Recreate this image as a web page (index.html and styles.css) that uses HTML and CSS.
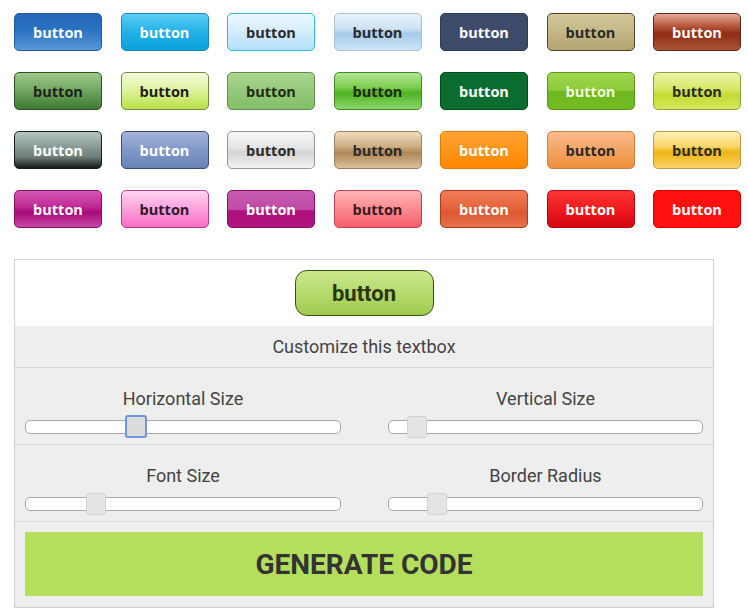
FILE: index.html
```html
<!DOCTYPE html>
<html>
<head>
<meta charset="utf-8">
<link rel="stylesheet" href="styles.css">
</head>
<body>
<div class="grid">
  <div class="btn c-blue">button</div>
  <div class="btn c-sky">button</div>
  <div class="btn c-ice">button</div>
  <div class="btn c-frost">button</div>
  <div class="btn c-navy">button</div>
  <div class="btn c-khaki">button</div>
  <div class="btn c-rust">button</div>

  <div class="btn c-forest">button</div>
  <div class="btn c-limelight">button</div>
  <div class="btn c-sage">button</div>
  <div class="btn c-grass">button</div>
  <div class="btn c-pine">button</div>
  <div class="btn c-lime">button</div>
  <div class="btn c-chartreuse">button</div>

  <div class="btn c-slate">button</div>
  <div class="btn c-steel">button</div>
  <div class="btn c-silver">button</div>
  <div class="btn c-tan">button</div>
  <div class="btn c-orange">button</div>
  <div class="btn c-peach">button</div>
  <div class="btn c-gold">button</div>

  <div class="btn c-magenta">button</div>
  <div class="btn c-pink">button</div>
  <div class="btn c-berry">button</div>
  <div class="btn c-salmon">button</div>
  <div class="btn c-coral">button</div>
  <div class="btn c-red">button</div>
  <div class="btn c-scarlet">button</div>
</div>

<div class="panel">
  <div class="preview">
    <div class="preview-btn">button</div>
  </div>
  <div class="customize">Customize this textbox</div>
  <div class="slider-row">
    <div class="slider">
      <div class="slider-label">Horizontal Size</div>
      <div class="track"><div class="thumb focused" style="left:99px"></div></div>
    </div>
    <div class="slider">
      <div class="slider-label">Vertical Size</div>
      <div class="track"><div class="thumb" style="left:18px"></div></div>
    </div>
  </div>
  <div class="slider-row">
    <div class="slider">
      <div class="slider-label">Font Size</div>
      <div class="track"><div class="thumb" style="left:60px"></div></div>
    </div>
    <div class="slider">
      <div class="slider-label">Border Radius</div>
      <div class="track"><div class="thumb" style="left:38px"></div></div>
    </div>
  </div>
  <div class="generate-wrap">
    <div class="generate">GENERATE CODE</div>
  </div>
</div>
</body>
</html>
```

FILE: styles.css
```css
html, body {
  margin: 0;
  padding: 0;
  background: #ffffff;
}
body {
  padding: 13px 14px 0 14px;
  font-family: Roboto, "Liberation Sans", sans-serif;
}

.grid {
  display: grid;
  grid-template-columns: repeat(7, 88px);
  grid-auto-rows: 38px;
  column-gap: 18.5px;
  row-gap: 21px;
}

.btn {
  box-sizing: border-box;
  border: 1px solid #333;
  border-radius: 5px;
  display: flex;
  align-items: center;
  justify-content: center;
  font-family: "Open Sans", "DejaVu Sans", sans-serif;
  font-weight: 700;
  font-size: 14.5px;
  color: #2b2b2b;
}

/* row 1 */
.c-blue { background: linear-gradient(#2467b6 0%, #2a72c2 45%, #5a97d8 100%); border-color: #1e5a9c; color: #fff; }
.c-sky { background: linear-gradient(#5ecdf5 0%, #22b2e6 50%, #0aa2dc 100%); border-color: #1b85b6; color: #fff; }
.c-ice { background: linear-gradient(#eef8ff 0%, #d3ecfc 50%, #b2dffa 100%); border-color: #3cb6d8; color: #2a2a2a; }
.c-frost { background: linear-gradient(#eaf3fb 0%, #cde2f3 40%, #a4cbea 55%, #cfe4f5 100%); border-color: #a5bfd5; color: #2a2a2a; }
.c-navy { background: #3d4a6a; border-color: #2f3954; color: #fff; }
.c-khaki { background: linear-gradient(#d3c89b 0%, #c2b585 55%, #b4a570 100%); border-color: #4e4428; color: #2a2a2a; }
.c-rust { background: linear-gradient(#e6ab96 0%, #b2543a 35%, #8e2c14 55%, #ad5434 100%); border-color: #5a2818; color: #fff; }

/* row 2 */
.c-forest { background: linear-gradient(#9fc98b 0%, #6fa55e 50%, #3e7a32 100%); border-color: #2c5224; color: #1e1e1e; }
.c-limelight { background: linear-gradient(#f4fcdd 0%, #dcf29a 50%, #b8e047 100%); border-color: #6f8a42; color: #1e1e1e; }
.c-sage { background: linear-gradient(#a9d68e 0%, #92c877 55%, #84bf69 100%); border-color: #5f8f4a; color: #1e2a14; }
.c-grass { background: linear-gradient(#b3e595 0%, #7cce4e 40%, #4fb322 55%, #8ad86b 100%); border-color: #3f8b27; color: #1e2a14; }
.c-pine { background: #0b6c2f; border-color: #074d20; color: #fff; }
.c-lime { background: linear-gradient(#a0d650 0%, #8ccb3a 48%, #6cb71e 52%, #74bc24 100%); border-color: #5a9620; color: #f4ffdc; }
.c-chartreuse { background: linear-gradient(#eaf2a8 0%, #d8e866 45%, #c5da34 60%, #d6e65a 100%); border-color: #8ea238; color: #2a2a2a; }

/* row 3 */
.c-slate { background: linear-gradient(#b5c5bd 0%, #8a9c96 40%, #6c7c76 70%, #141818 100%); border-color: #1c1c1c; color: #fff; }
.c-steel { background: linear-gradient(#a3b5dc 0%, #8298c8 50%, #6882b6 100%); border-color: #3b4b74; color: #fff; }
.c-silver { background: linear-gradient(#f6f6f6 0%, #e4e4e4 45%, #d4d4d4 55%, #f2f2f2 100%); border-color: #979797; color: #2a2a2a; }
.c-tan { background: linear-gradient(#efdcbd 0%, #ceaf84 40%, #ad8656 58%, #dcc29c 100%); border-color: #9c8264; color: #2a2a2a; }
.c-orange { background: linear-gradient(#ffa334 0%, #ff9419 50%, #ff8700 100%); border-color: #e07a00; color: #fff; }
.c-peach { background: linear-gradient(#f8bb8e 0%, #f4a462 50%, #ef903c 100%); border-color: #cf8142; color: #2a2a2a; }
.c-gold { background: linear-gradient(#fff1b4 0%, #fad66a 40%, #efb515 55%, #f8d264 100%); border-color: #c09a44; color: #2a2a2a; }

/* row 4 */
.c-magenta { background: linear-gradient(#d457b4 0%, #c12e99 40%, #a90a79 60%, #c64aa5 100%); border-color: #881060; color: #fff; }
.c-pink { background: linear-gradient(#ffd6f2 0%, #fca0dc 50%, #f66ec6 100%); border-color: #bf3a8e; color: #2e1a2e; }
.c-berry { background: linear-gradient(#c85cb1 0%, #bf4aa6 52%, #ad0f7c 55%, #b01480 100%); border-color: #88105e; color: #fff; }
.c-salmon { background: linear-gradient(#ffb6b6 0%, #fb8a90 50%, #f65e6e 100%); border-color: #c43e58; color: #3a1a1a; }
.c-coral { background: linear-gradient(#f27c56 0%, #e6653e 45%, #dd5730 60%, #e8734c 100%); border-color: #ad3a22; color: #fff; }
.c-red { background: linear-gradient(#ff3434 0%, #ee1b1f 50%, #d60412 100%); border-color: #af0a14; color: #fff; }
.c-scarlet { background: #ff1010; border-color: #d40000; color: #fff; }

/* panel */
.panel {
  margin-top: 31px;
  width: 700px;
  box-sizing: border-box;
  border: 1px solid #cfcfcf;
  background: #eeeeee;
}
.preview {
  background: #ffffff;
  padding: 10px 0;
  display: flex;
  justify-content: center;
}
.preview-btn {
  box-sizing: border-box;
  width: 139px;
  height: 46px;
  border: 1px solid #3c5214;
  border-radius: 12px;
  background: linear-gradient(#cde88f 0%, #b4da6c 50%, #9dcb4e 100%);
  display: flex;
  align-items: center;
  justify-content: center;
  font-weight: 700;
  font-size: 22px;
  color: #2a3612;
}
.customize {
  height: 41px;
  display: flex;
  align-items: center;
  justify-content: center;
  font-size: 18px;
  color: #444;
  border-bottom: 1px solid #d9d9d9;
}
.slider-row {
  height: 76px;
  border-bottom: 1px solid #d9d9d9;
  padding: 0 10px 0 10px;
  display: grid;
  grid-template-columns: 316px 315px;
  column-gap: 47px;
}
.slider {
  display: flex;
  flex-direction: column;
  padding-top: 20px;
}
.slider-label {
  font-size: 18px;
  line-height: 22px;
  color: #444;
  text-align: center;
}
.track {
  position: relative;
  margin-top: 10px;
  height: 14px;
  box-sizing: border-box;
  border: 1px solid #a8a8a8;
  border-radius: 5px;
  background: #ffffff;
}
.thumb {
  position: absolute;
  top: -5px;
  width: 20px;
  height: 22px;
  box-sizing: border-box;
  background: #e4e4e4;
  border: 1px solid #d2d2d2;
  border-radius: 3px;
}
.thumb.focused {
  width: 22px;
  height: 23px;
  top: -6px;
  background: #dcdcdc;
  border: 2px solid #7095e0;
}
.generate-wrap {
  padding: 10px 10px 11px 10px;
}
.generate {
  height: 64px;
  background: #b4df5c;
  display: flex;
  align-items: center;
  justify-content: center;
  font-weight: 700;
  font-size: 28px;
  color: #333333;
}
```
